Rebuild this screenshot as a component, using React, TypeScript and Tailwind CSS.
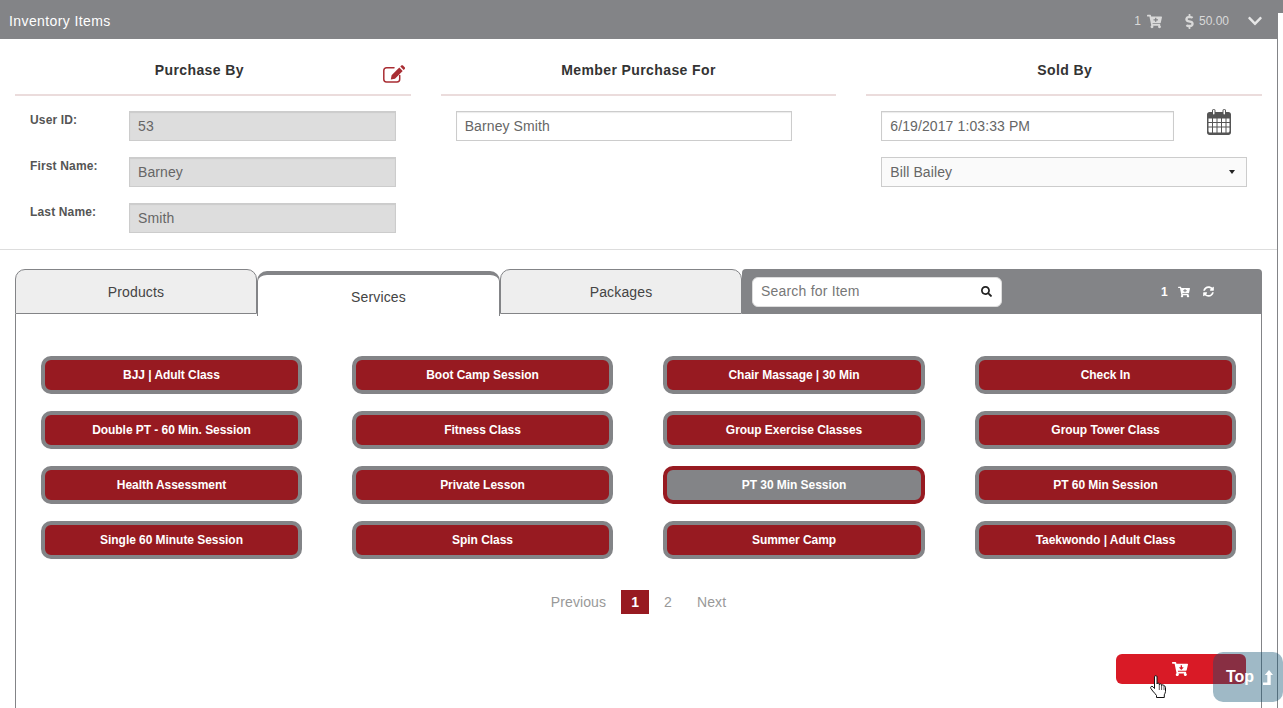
import {
  FaCartArrowDown,
  FaCartPlus,
  FaChevronDown,
  FaDollarSign,
  FaSearch,
  FaSyncAlt,
} from "react-icons/fa";

const services = [
  "BJJ | Adult Class",
  "Boot Camp Session",
  "Chair Massage | 30 Min",
  "Check In",
  "Double PT - 60 Min. Session",
  "Fitness Class",
  "Group Exercise Classes",
  "Group Tower Class",
  "Health Assessment",
  "Private Lesson",
  "PT 30 Min Session",
  "PT 60 Min Session",
  "Single 60 Minute Session",
  "Spin Class",
  "Summer Camp",
  "Taekwondo | Adult Class",
];

const purchaseFields = [
  { label: "User ID:", value: "53" },
  { label: "First Name:", value: "Barney" },
  { label: "Last Name:", value: "Smith" },
];

function CalendarIcon() {
  return (
    <svg width="24" height="26" viewBox="0 0 24 26" className="text-[#555]">
      <path
        fill="currentColor"
        fillRule="evenodd"
        d="M2.5 3H5V1.8C5 .8 5.8 0 6.8 0s1.700 .8 1.700 1.800V3h7V1.800C15.500 .8 16.300 0 17.300 0S19 .8 19 1.800V3h2.500C22.900 3 24 4.100 24 5.500v18c0 1.400-1.100 2.500-2.500 2.500h-19C1.100 26 0 24.900 0 23.500v-18C0 4.100 1.100 3 2.500 3zM6 1.500v3.300c0 .4.300.7.800.7s.7-.3.700-.7V1.500c0-.4-.3-.7-.7-.7S6 1.100 6 1.500zm10.500 0v3.300c0 .4.300.7.800.7s.7-.3.700-.7V1.500c0-.4-.3-.7-.7-.7s-.8.300-.8.700zM1.500 9.500V13H5V9.500H1.500zm4.500 0V13h3.500V9.500H6zm4.500 0V13H14V9.500h-3.500zm4.500 0V13h3.500V9.500H15zm4.500 0V13h3V9.500h-3zM1.500 14v3.500H5V14H1.500zM6 14v3.500h3.500V14H6zm4.500 0v3.500H14V14h-3.500zm4.500 0v3.500h3.500V14H15zm4.500 0v3.500h3V14h-3zM1.500 18.500v3.500c0 .8.700 1.500 1.500 1.500h2v-5H1.500zm4.500 0v5h3.500v-5H6zm4.500 0v5H14v-5h-3.500zm4.500 0v5h3.500v-5H15zm4.500 0v5H21c.8 0 1.500-.7 1.500-1.500v-3.500h-3z"
      />
    </svg>
  );
}

function EditIcon() {
  return (
    <svg width="22" height="18" viewBox="0 0 22 18" className="absolute right-[6px] top-[26px] text-[#a92d33]">
      <path
        fill="none"
        stroke="currentColor"
        strokeWidth="1.500"
        strokeLinecap="round"
        d="M11 2.800H3.500C2 2.800 .8 4 .8 5.500v8.700c0 1.500 1.200 2.700 2.700 2.700h10.500c1.500 0 2.700-1.200 2.700-2.700V10.500"
      />
      <path
        fill="currentColor"
        d="M16.300 2.600 19.700 6 12 13.700l-4.200.8.800-4.200L16.300 2.600zM17.300 1.600l1-1c.5-.5 1.200-.5 1.700 0l1.700 1.700c.5.5.5 1.200 0 1.700l-1 1-3.400-3.400z"
      />
    </svg>
  );
}

function TopArrow() {
  return (
    <svg width="10" height="15" viewBox="0 0 10 15" className="text-white">
      <path fill="currentColor" d="M0 12.500h4.300V5H1.800L6 0l4 5H7.700v10H0v-2.500z" />
    </svg>
  );
}

function HandCursor() {
  return (
    <svg width="17" height="24" viewBox="0 0 17 24" className="absolute left-[1150px] top-[675px]">
      <path
        fill="#fff"
        stroke="#111"
        strokeWidth="1"
        strokeLinejoin="round"
        d="M4.500 1.800c0-1.500 2.500-1.500 2.500 0V9c0-1.200 2.300-1.200 2.300 0v.8c0-1.200 2.300-1.200 2.300 0v.8c0-1.200 2.400-1 2.400.3.900 0 1.500.5 1.500 1.500v4.100c0 1.200-.8 2.200-1.200 3.300v2.700H6.500v-2c-1-1.500-2.300-2.800-3.800-4.500L.8 13.300c-.8-1.300.9-2.800 2.200-1.500l1.500 1.700V1.800z"
      />
      <path stroke="#111" strokeWidth="0.7" d="M9.300 10v5M11.600 10.500v4.500M14 11v4" />
    </svg>
  );
}

function SectionHeading({ title, className = "" }: { title: string; className?: string }) {
  return (
    <h3
      className={`flex h-[57px] items-center justify-center border-b-2 border-[#ebdcdc] pt-[8px] text-[14px] font-bold tracking-[0.4px] text-[#333] ${className}`}
    >
      {title}
    </h3>
  );
}

export default function App() {
  return (
    <div className="relative h-[708px] w-[1283px] overflow-hidden bg-white font-['Liberation_Sans',Arial,sans-serif] text-[#555]">
      <div className="absolute right-0 top-0 h-[13px] w-[6px] bg-[#838487]" />
      <div className="h-full w-[1278px] border-r border-[#838487]">
        {/* Title bar */}
        <div className="flex h-[39px] items-center bg-[#838487] pl-[9px] pr-[14px] pt-[3px] text-white">
          <span className="text-[14px] tracking-[0.4px]">Inventory Items</span>
          <div className="ml-auto flex items-center text-[12px] text-[#d9d9d9]">
            <span>1</span>
            <FaCartPlus className="ml-[6px] text-[15px]" />
            <FaDollarSign className="ml-[20px] text-[15px]" />
            <span className="ml-[2px]">50.00</span>
            <FaChevronDown className="ml-[18px] text-[16px] text-[#e6e6e6]" />
          </div>
        </div>

        {/* Purchase details */}
        <div className="grid h-[211px] grid-cols-3 gap-x-[30px] border-b border-[#ddd] px-[15px]">
          <div>
            <div className="relative">
              <SectionHeading title="Purchase By" className="pr-[27px]" />
              <EditIcon />
            </div>
            <div className="mt-[15px] flex flex-col gap-[16px]">
              {purchaseFields.map((field) => (
                <div key={field.label} className="flex">
                  <label className="w-[114px] pl-[15px] text-[12px] font-bold tracking-[0.15px] text-[#555]">
                    {field.label}
                  </label>
                  <div className="flex h-[30px] w-[267px] items-center border border-[#ccc] bg-[#ddd] px-[8px] text-[14px] tracking-[0.1px] text-[#666] shadow-[inset_0_1px_1px_rgba(0,0,0,0.08)]">
                    {field.value}
                  </div>
                </div>
              ))}
            </div>
          </div>

          <div>
            <SectionHeading title="Member Purchase For" />
            <div className="mt-[15px] px-[15px]">
              <div className="flex h-[30px] w-[336px] items-center border border-[#ccc] bg-white px-[8px] text-[14px] tracking-[0.1px] text-[#666] shadow-[inset_0_1px_1px_rgba(0,0,0,0.08)]">
                Barney Smith
              </div>
            </div>
          </div>

          <div>
            <SectionHeading title="Sold By" className="pl-[1px]" />
            <div className="mt-[15px] flex flex-col gap-[16px] px-[15px]">
              <div className="flex items-start">
                <div className="flex h-[30px] w-[293px] items-center border border-[#ccc] bg-white px-[8px] text-[14px] tracking-[0.1px] text-[#666] shadow-[inset_0_1px_1px_rgba(0,0,0,0.08)]">
                  6/19/2017 1:03:33 PM
                </div>
                <div className="-mt-[2px] ml-[33px]">
                  <CalendarIcon />
                </div>
              </div>
              <div className="flex h-[30px] w-[366px] items-center justify-between border border-[#ccc] bg-[#fafafa] pl-[8px] pr-[11px] text-[14px] tracking-[0.1px] text-[#666]">
                Bill Bailey
                <span className="border-x-[3.500px] border-t-[4px] border-x-transparent border-t-[#222]" />
              </div>
            </div>
          </div>
        </div>

        {/* Tabs */}
        <div className="px-[15px] pt-[19px]">
          <div className="flex h-[47px] items-start">
            <div className="flex h-[45px] w-[242px] items-center justify-center rounded-t-[10px] border border-[#838487] bg-[#eee] pt-[2px] text-[14px] tracking-[0.15px] text-[#444]">
              Products
            </div>
            <div className="mt-[2px] flex h-[45px] w-[243px] items-center justify-center rounded-t-[10px] border-x border-t-4 border-[#838487] bg-white pt-[4px] text-[14px] tracking-[0.15px] text-[#444]">
              Services
            </div>
            <div className="flex h-[45px] w-[242px] items-center justify-center rounded-t-[10px] border border-[#838487] bg-[#eee] pt-[2px] text-[14px] tracking-[0.15px] text-[#444]">
              Packages
            </div>
            <div className="flex h-[45px] flex-1 items-center rounded-t-[4px] bg-[#838487] pl-[10px]">
              <div className="flex h-[30px] w-[250px] items-center justify-between rounded-[6px] border border-[#ddd] bg-white pl-[8px] pr-[9px] text-[14px] tracking-[0.2px] text-[#777]">
                Search for Item
                <FaSearch className="text-[11px] text-[#222]" />
              </div>
              <div className="ml-[159px] flex items-center text-[12px] font-bold text-white">
                <span>1</span>
                <FaCartPlus className="ml-[10px] text-[12px]" />
                <FaSyncAlt className="ml-[13px] text-[11px]" />
              </div>
            </div>
          </div>

          {/* Services panel */}
          <div className="-mt-[2px] h-[400px] w-[1247px] border-x border-[#838487] pt-[42px]">
            <div className="grid grid-cols-[261px_261px_262px_261px] gap-x-[50px] gap-y-[17px] pl-[25px]">
              {services.map((name) => {
                const selected = name === "PT 30 Min Session";
                return (
                  <div
                    key={name}
                    className={
                      selected
                        ? "flex h-[38px] items-center justify-center rounded-[10px] border-4 border-[#971a21] bg-[#838487] text-[12px] font-bold tracking-[-0.05px] text-white"
                        : "flex h-[38px] items-center justify-center rounded-[10px] border-4 border-[#838487] bg-[#971a21] text-[12px] font-bold tracking-[-0.05px] text-white"
                    }
                  >
                    {name}
                  </div>
                );
              })}
            </div>

            <div className="mt-[31px] flex items-center justify-center pr-[0px] text-[14px] tracking-[0.1px] text-[#999]">
              <span>Previous</span>
              <span className="ml-[15px] flex h-[24px] w-[28px] items-center justify-center bg-[#971a21] font-bold text-white">
                1
              </span>
              <span className="ml-[15px]">2</span>
              <span className="ml-[25px]">Next</span>
            </div>
          </div>
        </div>
      </div>

      {/* Floating controls */}
      <div className="absolute left-[1116px] top-[654px] flex h-[30px] w-[130px] items-center justify-center rounded-[6px] bg-[#d91a26] pr-[2px] text-white">
        <FaCartArrowDown className="text-[16px]" />
      </div>
      <HandCursor />
      <div className="absolute left-[1213px] top-[652px] flex h-[50px] w-[70px] items-center justify-center gap-[9px] rounded-[10px] bg-[#0f5070]/40 pl-[3px] text-[16px] font-bold text-white">
        Top
        <TopArrow />
      </div>
    </div>
  );
}
